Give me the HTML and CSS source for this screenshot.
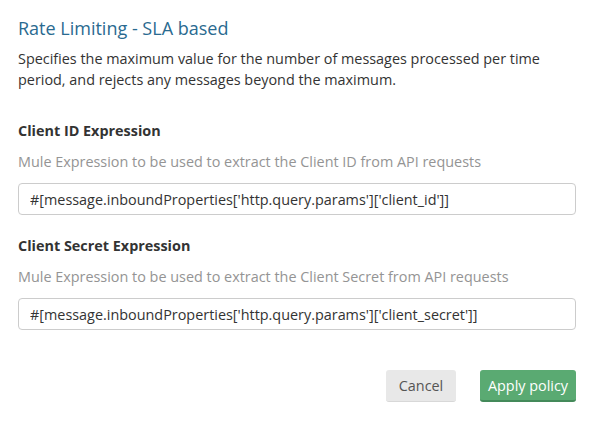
FILE: index.html
```html
<!DOCTYPE html>
<html>
<head>
<meta charset="utf-8">
<link rel="stylesheet" href="styles.css">
</head>
<body>
<div class="dialog">
  <h1 class="title">Rate Limiting - SLA based</h1>
  <p class="desc">Specifies the maximum value for the number of messages processed per time period, and rejects any messages beyond the maximum.</p>
  <div class="field first">
    <div class="label">Client ID Expression</div>
    <div class="help">Mule Expression to be used to extract the Client ID from API requests</div>
    <input class="input" type="text" value="#[message.inboundProperties['http.query.params']['client_id']]">
  </div>
  <div class="field">
    <div class="label">Client Secret Expression</div>
    <div class="help">Mule Expression to be used to extract the Client Secret from API requests</div>
    <input class="input" type="text" value="#[message.inboundProperties['http.query.params']['client_secret']]">
  </div>
  <div class="actions">
    <button class="btn cancel">Cancel</button>
    <button class="btn apply">Apply policy</button>
  </div>
</div>
</body>
</html>
```
FILE: styles.css
```css
html, body {
  margin: 0;
  padding: 0;
  background: #ffffff;
}
body {
  font-family: "Open Sans", "Liberation Sans", sans-serif;
  color: #333333;
  width: 593px;
  height: 422px;
  overflow: hidden;
}
.dialog {
  padding: 16px 17px 0 18px;
}
.title {
  margin: 0;
  font-size: 18px;
  font-weight: 400;
  line-height: 24px;
  color: #2a6a90;
}
.desc {
  margin: 8px 0 0 0;
  font-size: 14.4px;
  line-height: 21px;
  color: #333333;
}
.field {
  margin-top: 21px;
}
.field.first {
  margin-top: 31px;
}
.label {
  font-size: 14.4px;
  font-weight: 700;
  line-height: 20px;
  color: #333333;
}
.help {
  margin-top: 11px;
  font-size: 14.4px;
  line-height: 20px;
  color: #949494;
}
.input {
  display: block;
  box-sizing: border-box;
  width: 100%;
  height: 32px;
  margin: 11px 0 0 0;
  padding: 0 0 0 11px;
  border: 1px solid #cccccc;
  border-radius: 4px;
  font-family: "Open Sans", "Liberation Sans", sans-serif;
  font-size: 14.4px;
  color: #333333;
  background: #ffffff;
  outline: none;
}
.actions {
  display: flex;
  justify-content: flex-end;
  gap: 24px;
  margin-top: 40px;
}
.btn {
  box-sizing: border-box;
  height: 32px;
  padding: 0;
  border: none;
  border-radius: 3px;
  font-family: "Open Sans", "Liberation Sans", sans-serif;
  font-size: 14.4px;
  line-height: 32px;
  text-align: center;
  white-space: nowrap;
  cursor: pointer;
}
.cancel {
  width: 70px;
  background: #e8e8e8;
  color: #555555;
  border-bottom: 1px solid #d8d8d8;
}
.apply {
  width: 96px;
  background: #5aaa72;
  color: #ffffff;
  border-bottom: 2px solid #448a5a;
}
```
